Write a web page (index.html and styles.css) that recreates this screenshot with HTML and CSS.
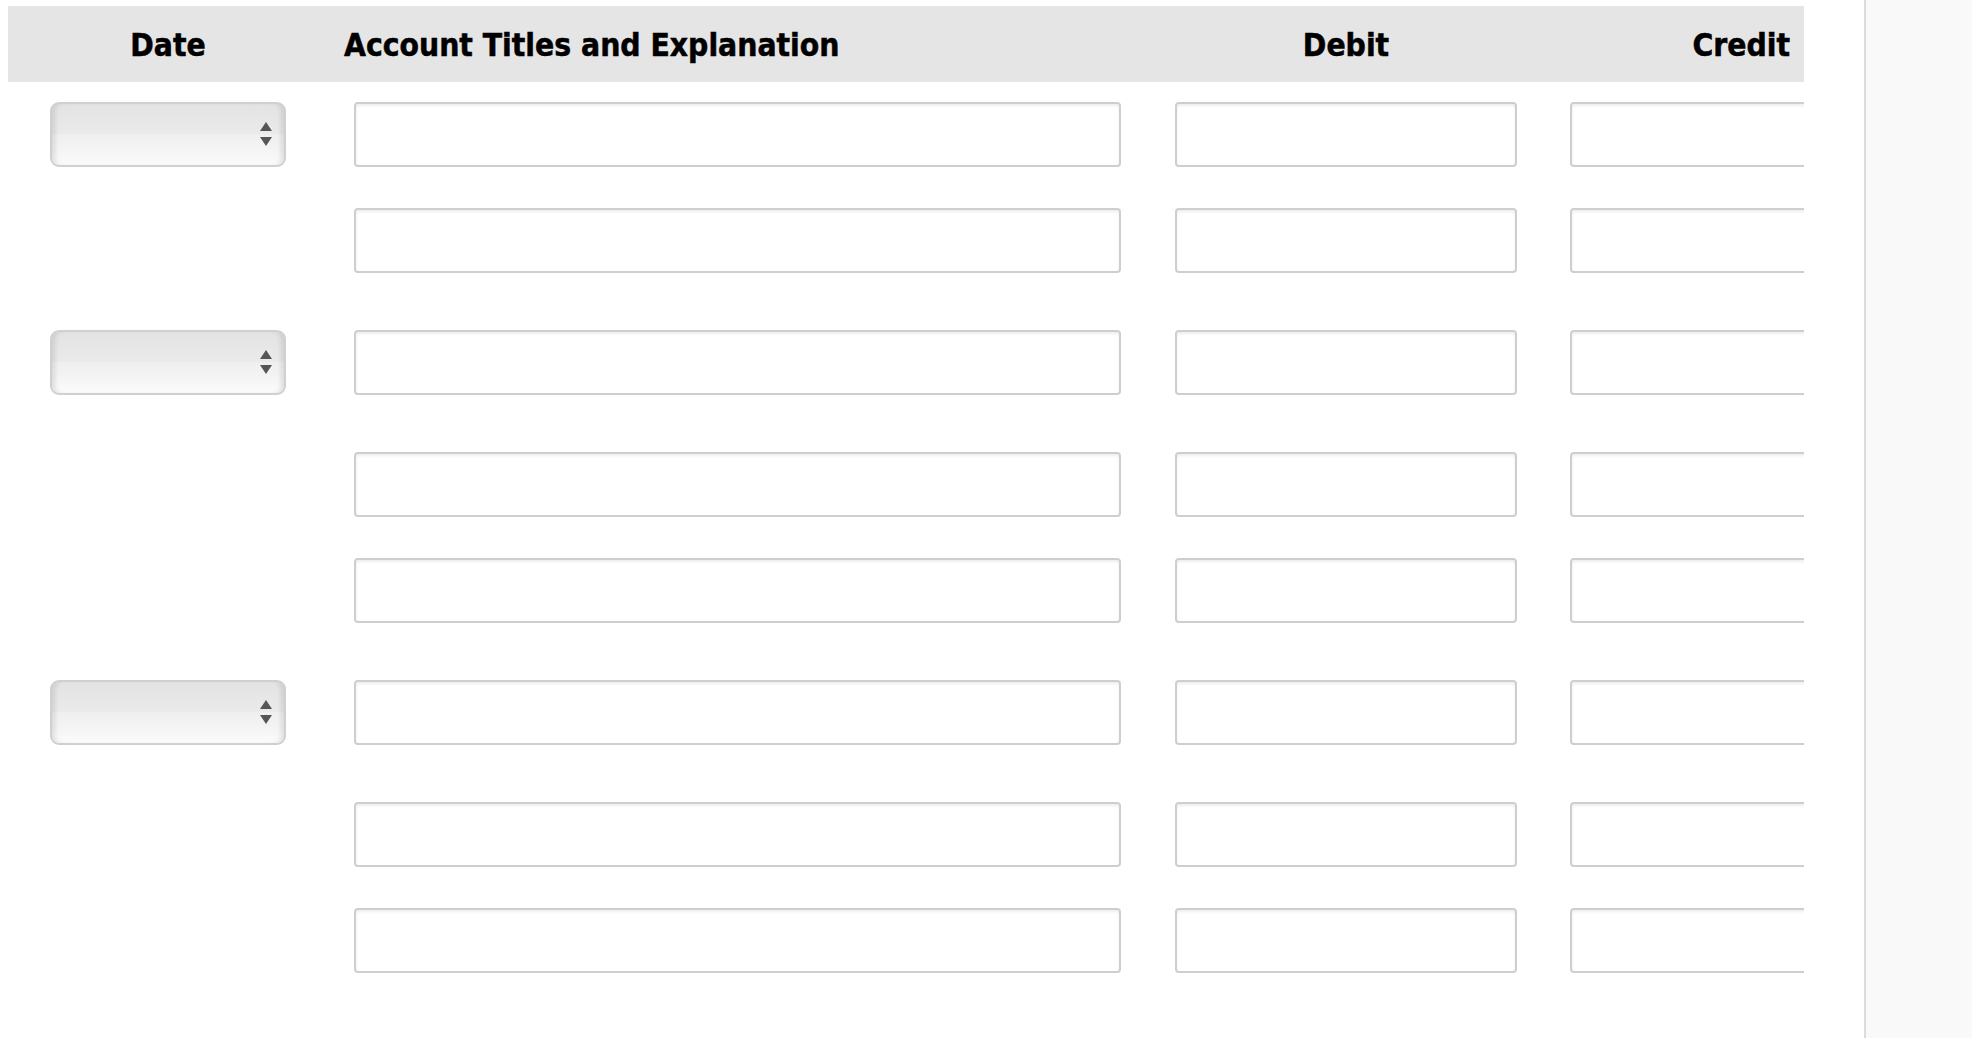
FILE: index.html
```html
<!DOCTYPE html>
<html lang="en">
<head>
<meta charset="utf-8">
<title>Journal Entry</title>
<link rel="stylesheet" href="styles.css">
</head>
<body>
<div class="page">
  <main class="main">
    <div class="journal">
      <div class="head">
        <div class="h-date">Date</div>
        <div class="h-acct">Account Titles and Explanation</div>
        <div class="h-debit">Debit</div>
        <div class="h-credit">Credit</div>
      </div>
      <div class="body">
        <div class="row">
          <div class="c-date"><div class="select"><svg class="arrows" width="12" height="25" viewBox="0 0 12 25"><polygon points="6,0 12,9 0,9"/><polygon points="0,15 12,15 6,24"/></svg></div></div>
          <div class="c-acct"><input class="field acct" type="text"></div>
          <div class="c-debit"><input class="field amt" type="text"></div>
          <div class="c-credit"><input class="field amt" type="text"></div>
        </div>
        <div class="row">
          <div class="c-date"></div>
          <div class="c-acct"><input class="field acct" type="text"></div>
          <div class="c-debit"><input class="field amt" type="text"></div>
          <div class="c-credit"><input class="field amt" type="text"></div>
        </div>
        <div class="row spaced">
          <div class="c-date"><div class="select"><svg class="arrows" width="12" height="25" viewBox="0 0 12 25"><polygon points="6,0 12,9 0,9"/><polygon points="0,15 12,15 6,24"/></svg></div></div>
          <div class="c-acct"><input class="field acct" type="text"></div>
          <div class="c-debit"><input class="field amt" type="text"></div>
          <div class="c-credit"><input class="field amt" type="text"></div>
        </div>
        <div class="row spaced">
          <div class="c-date"></div>
          <div class="c-acct"><input class="field acct" type="text"></div>
          <div class="c-debit"><input class="field amt" type="text"></div>
          <div class="c-credit"><input class="field amt" type="text"></div>
        </div>
        <div class="row">
          <div class="c-date"></div>
          <div class="c-acct"><input class="field acct" type="text"></div>
          <div class="c-debit"><input class="field amt" type="text"></div>
          <div class="c-credit"><input class="field amt" type="text"></div>
        </div>
        <div class="row spaced">
          <div class="c-date"><div class="select"><svg class="arrows" width="12" height="25" viewBox="0 0 12 25"><polygon points="6,0 12,9 0,9"/><polygon points="0,15 12,15 6,24"/></svg></div></div>
          <div class="c-acct"><input class="field acct" type="text"></div>
          <div class="c-debit"><input class="field amt" type="text"></div>
          <div class="c-credit"><input class="field amt" type="text"></div>
        </div>
        <div class="row spaced">
          <div class="c-date"></div>
          <div class="c-acct"><input class="field acct" type="text"></div>
          <div class="c-debit"><input class="field amt" type="text"></div>
          <div class="c-credit"><input class="field amt" type="text"></div>
        </div>
        <div class="row">
          <div class="c-date"></div>
          <div class="c-acct"><input class="field acct" type="text"></div>
          <div class="c-debit"><input class="field amt" type="text"></div>
          <div class="c-credit"><input class="field amt" type="text"></div>
        </div>
      </div>
    </div>
  </main>
  <aside class="side"></aside>
</div>
</body>
</html>
```
FILE: styles.css
```css
html, body {
  margin: 0;
  padding: 0;
  background: #ffffff;
}
body {
  font-family: "DejaVu Sans Condensed", "DejaVu Sans", sans-serif;
  color: #000;
}
.page {
  display: flex;
  height: 1038px;
  overflow: hidden;
}
.main {
  flex: 1;
  padding: 6px 0 0 8px;
}
.side {
  width: 106px;
  background: #f9f9f9;
  border-left: 2px solid #dcdcdc;
}
.journal {
  width: 1796px;
  overflow: hidden;
}
.head,
.row {
  display: grid;
  grid-template-columns: 320px 826px 384px minmax(0, 1fr);
}
.head {
  height: 76px;
  background: #e5e5e5;
  align-items: center;
  font-weight: bold;
  font-size: 31.5px;
  font-stretch: condensed;
  -webkit-text-stroke: 0.5px #000;
}
.h-date { text-align: center; padding-top: 2px; }
.h-acct { padding-left: 16px; padding-top: 2px; }
.h-debit { text-align: center; padding-top: 2px; }
.h-credit { text-align: right; padding-right: 14px; padding-top: 2px; }

.body {
  display: flex;
  flex-direction: column;
  gap: 41px;
  padding-top: 20px;
}
.row {
  height: 65px;
}
.row.spaced {
  margin-top: 16px;
}
.c-date {
  display: flex;
  justify-content: center;
}
.select {
  box-sizing: border-box;
  width: 236px;
  height: 65px;
  border: 2px solid #d0d0d0;
  border-radius: 9px;
  background: linear-gradient(to bottom, #e3e3e3 0%, #eaeaea 48%, #efefef 50%, #f4f4f4 75%, #fbfbfb 100%);
  box-shadow: inset 6px 0 5px -3px rgba(0, 0, 0, 0.10), inset -6px 0 5px -3px rgba(0, 0, 0, 0.10);
  display: flex;
  align-items: center;
  justify-content: flex-end;
  padding-right: 12px;
}
.arrows {
  fill: #555555;
  display: block;
}
.field {
  box-sizing: border-box;
  height: 65px;
  margin: 0;
  padding: 0 10px;
  border: 2px solid #cecece;
  border-radius: 4px;
  background: #ffffff;
  box-shadow: inset 0 2px 3px rgba(0, 0, 0, 0.07);
  font: 20px "DejaVu Sans", sans-serif;
  outline: none;
  display: block;
}
.acct {
  width: 767px;
  margin-left: 26px;
}
.c-debit {
  display: flex;
  justify-content: center;
}
.amt {
  width: 342px;
}
.c-credit .amt {
  margin-left: 32px;
}
```
